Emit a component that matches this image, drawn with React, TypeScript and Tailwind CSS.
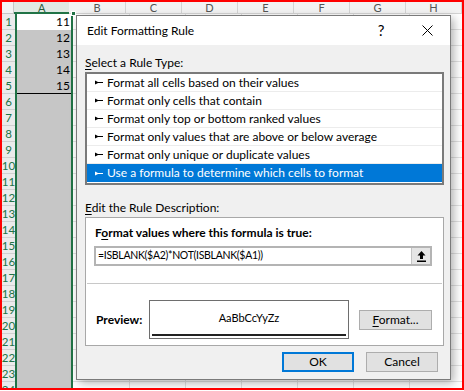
import React from 'react';

const rows = Array.from({ length: 24 }, (_, i) => i + 1);
const sideCols = [
  { name: 'B', w: 'w-[57px]' },
  { name: 'C', w: 'w-[56px]' },
  { name: 'D', w: 'w-[56px]' },
  { name: 'E', w: 'w-[56px]' },
  { name: 'F', w: 'w-[56px]' },
  { name: 'G', w: 'w-[56px]' },
  { name: 'H', w: 'w-[56px]' },
];
const values: Record<number, number> = { 1: 11, 2: 12, 3: 13, 4: 14, 5: 15 };

const ruleTypes = [
  'Format all cells based on their values',
  'Format only cells that contain',
  'Format only top or bottom ranked values',
  'Format only values that are above or below average',
  'Format only unique or duplicate values',
  'Use a formula to determine which cells to format',
];

function RuleArrow() {
  return (
    <svg width="8" height="5" viewBox="0 0 8 5" className="shrink-0">
      <path d="M0 0.5L3 2H8V3H3L0 4.5Z" fill="currentColor" />
    </svg>
  );
}

function Sheet() {
  return (
    <div className="flex flex-col h-full">
      {/* column headers */}
      <div className="flex h-[12px] shrink-0 text-[11px] leading-none">
        <div className="w-[13px] bg-[#f3f3f3] border-r border-b border-[#c6c6c6]" />
        <div className="w-[58px] bg-[#e1e9e3] border-b-2 border-[#217346] flex items-center justify-center text-[#2a5c3c]">
          A
        </div>
        {sideCols.map((c) => (
          <div
            key={c.name}
            className={`${c.w} shrink-0 bg-[#f3f3f3] border-r border-b border-[#d4d4d4] flex items-center justify-center text-[#555]`}
          >
            {c.name}
          </div>
        ))}
      </div>

      <div className="flex flex-1 min-h-0">
        {/* row headers */}
        <div className="w-[13px] shrink-0 flex flex-col bg-[#ebebeb]">
          {rows.map((r) => (
            <div
              key={r}
              className="h-[16px] shrink-0 border-b border-[#d0d0d0] flex items-center justify-center text-[11.5px] leading-none text-[#217346]"
            >
              {r}
            </div>
          ))}
        </div>

        {/* column A, selected */}
        <div className="w-[58px] shrink-0 flex flex-col border-x-2 border-[#217346]">
          {rows.map((r) => (
            <div
              key={r}
              className={`h-[16px] shrink-0 flex items-center justify-end pr-[1px] text-[12px] leading-none text-black ${
                r === 1 ? 'bg-white' : 'bg-[#c6c6c6]'
              } ${r === 5 ? 'border-b border-black' : ''}`}
            >
              {values[r] ?? ''}
            </div>
          ))}
        </div>

        {/* rest of the grid */}
        <div className="flex flex-col">
          {rows.map((r) => (
            <div key={r} className="flex h-[16px] shrink-0">
              {sideCols.map((c) => (
                <div key={c.name} className={`${c.w} shrink-0 border-r border-b border-[#e1e1e1]`} />
              ))}
            </div>
          ))}
        </div>
      </div>
    </div>
  );
}

function Dialog() {
  return (
    <div className="absolute left-[74px] top-[13px] w-[375px] h-[365px] border border-[#7a7a7a] bg-[#f0f0f0] shadow-[3px_3px_9px_rgba(0,0,0,0.3)] flex flex-col text-[12px] text-black">
      {/* title bar */}
      <div className="h-[29px] shrink-0 bg-white flex items-center">
        <span className="pl-[10px]">Edit Formatting Rule</span>
        <span className="ml-auto w-[46px] h-full flex items-center justify-center text-[15px]">?</span>
        <span className="w-[46px] h-full flex items-center justify-center">
          <svg width="11" height="11" viewBox="0 0 11 11">
            <path d="M0.5 0.5L10.5 10.5M10.5 0.5L0.5 10.5" stroke="#000" strokeWidth="1" />
          </svg>
        </span>
      </div>

      <div className="flex-1 flex flex-col pl-[8px] pr-[6px]">
        <div className="mt-[9px] h-[18px] flex items-center">
          <span>
            <span className="underline underline-offset-2">S</span>elect a Rule Type:
          </span>
        </div>

        {/* rule type list */}
        <div className="h-[113px] border-2 border-[#7a7a7a] bg-white flex flex-col">
          {ruleTypes.map((t, i) => {
            const selected = i === ruleTypes.length - 1;
            return (
              <div
                key={t}
                className={`h-[18px] shrink-0 flex items-center gap-[4px] pl-[8px] ${
                  selected ? 'bg-[#0078d7] text-white' : 'border-b border-[#ececec]'
                }`}
              >
                <RuleArrow />
                <span>{t}</span>
              </div>
            );
          })}
        </div>

        <div className="mt-[14px] h-[18px] flex items-center">
          <span>
            <span className="underline underline-offset-2">E</span>dit the Rule Description:
          </span>
        </div>

        {/* description group */}
        <div className="h-[129px] border border-[#a8a8a8] bg-white flex flex-col">
          <div className="mt-[7px] h-[16px] pl-[9px] flex items-center font-bold">
            <span>
              F<span className="underline underline-offset-2">o</span>rmat values where this formula is true:
            </span>
          </div>
          <div className="mt-[5px] ml-[8px] w-[338px] h-[20px] border-2 border-[#b4b4b4] flex items-center">
            <span className="pl-[2px] flex-1 text-[10.5px] tracking-[-0.3px]">=ISBLANK($A2)*NOT(ISBLANK($A1))</span>
            <span className="w-[19px] h-full bg-[#e5e5e5] border-l border-[#c4c4c4] flex items-center justify-center">
              <svg width="9" height="11" viewBox="0 0 9 11">
                <path d="M4.5 0L0.5 4.5H3V8H6V4.5H8.5Z" fill="#000" />
                <rect x="0" y="9.5" width="9" height="1.5" fill="#000" />
              </svg>
            </span>
          </div>
          <div className="mt-[17px] mx-[1px] h-px bg-[#c8c8c8]" />
          <div className="mt-[16px] h-[39px] flex items-center">
            <span className="pl-[10px] w-[63px] font-bold">Preview:</span>
            <div className="w-[200px] h-full border border-[#6e6e6e] flex flex-col">
              <div className="flex-1 flex items-center justify-center pt-[2px] text-[11px]">AaBbCcYyZz</div>
              <div className="mx-[2px] mb-[2px] h-[2px] bg-[#222]" />
            </div>
            <button className="ml-[10px] w-[73px] h-[20px] bg-[#e1e1e1] border border-[#adadad] flex items-center justify-center">
              <span>
                <span className="underline underline-offset-2">F</span>ormat...
              </span>
            </button>
          </div>
        </div>

        {/* buttons */}
        <div className="mt-[6px] mr-[6px] flex justify-end gap-[12px]">
          <button className="w-[72px] h-[20px] bg-[#e1e1e1] border-2 border-[#0078d7] flex items-center justify-center">
            OK
          </button>
          <button className="w-[72px] h-[20px] bg-[#e1e1e1] border border-[#adadad] flex items-center justify-center">
            Cancel
          </button>
        </div>
      </div>
    </div>
  );
}

export default function App() {
  return (
    <div className="relative w-[464px] h-[390px] overflow-hidden border-2 border-[#ff0000] bg-white font-['Lato',sans-serif]">
      <Sheet />
      {/* fill handle corner */}
      <div className="absolute left-[69px] top-[9px] w-[5px] h-[5px] bg-[#217346] border border-white" />
      <Dialog />
    </div>
  );
}
